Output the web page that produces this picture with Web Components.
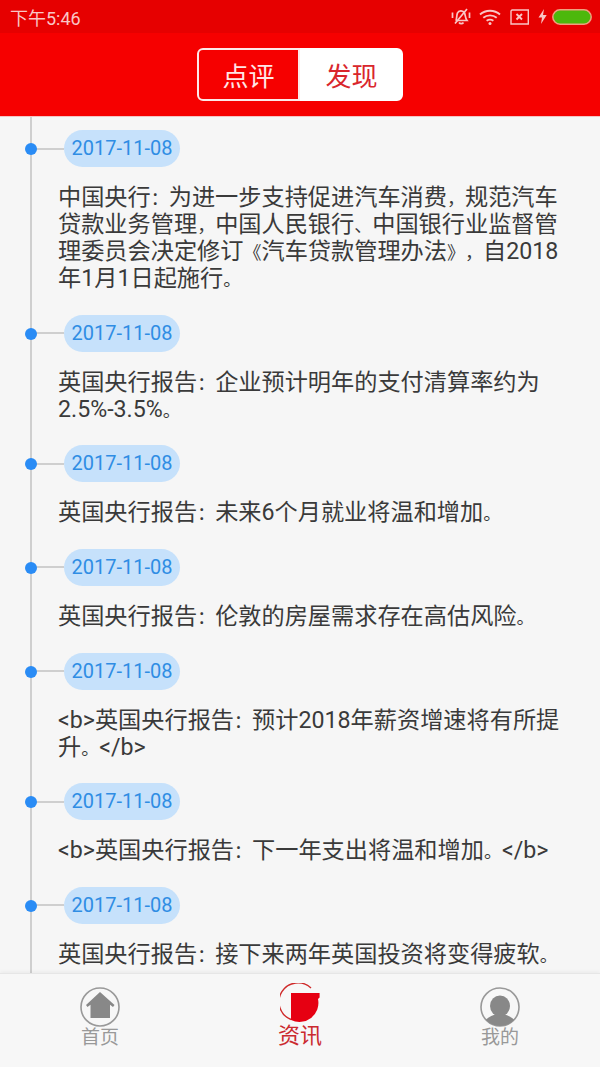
<!DOCTYPE html>
<html lang="zh">
<head>
<meta charset="utf-8">
<title>资讯</title>
<style>
  html, body { margin: 0; padding: 0; }
  body { font-family: Roboto, "Noto Sans CJK SC", sans-serif; background: #f6f6f6; }
  app-shell { width: 600px; height: 1067px; }
</style>
</head>
<body>
<app-shell>
  <status-bar slot="top" time="下午5:46"></status-bar>
  <seg-switch slot="top"></seg-switch>
  <news-timeline>
    <news-item date="2017-11-08">中国央行<span class="c">：</span>为进一步支持促进汽车消费<span class="c">，</span>规范汽车<span>贷款业务管理</span><span class="c">，</span>中国人民银行<span class="p">、</span>中国银行业监督管<span>理委员会决定修订</span><span class="p">《</span>汽车贷款管理办法<span class="p">》</span><span class="c">，</span>自2018<span>年1月1日起施行</span><span class="p">。</span></news-item>
    <news-item date="2017-11-08">英国央行报告<span class="c">：</span>企业预计明年的支付清算率约为<span>2.5%-3.5%</span><span class="p">。</span></news-item>
    <news-item date="2017-11-08">英国央行报告<span class="c">：</span>未来6个月就业将温和增加<span class="p">。</span></news-item>
    <news-item date="2017-11-08">英国央行报告<span class="c">：</span>伦敦的房屋需求存在高估风险<span class="p">。</span></news-item>
    <news-item date="2017-11-08">&lt;b&gt;英国央行报告<span class="c">：</span>预计2018年薪资增速将有所提<span>升</span><span class="c">。</span>&lt;/b&gt;</news-item>
    <news-item date="2017-11-08">&lt;b&gt;英国央行报告<span class="c">：</span>下一年支出将温和增加<span class="c">。</span>&lt;/b&gt;</news-item>
    <news-item date="2017-11-08">英国央行报告<span class="c">：</span>接下来两年英国投资将变得疲软<span class="p">。</span></news-item>
  </news-timeline>
  <tab-bar slot="bottom">
    <tab-item label="首页">
      <svg viewBox="0 0 40 40" width="40" height="40">
        <circle cx="20" cy="20" r="19" fill="none" stroke="#999" stroke-width="1.6"/>
        <path d="M20 5 L34.5 18 L33 20 L30 17.8 V31 H10.5 V17.8 L7.5 20 L6 18 Z" fill="#888"/>
      </svg>
    </tab-item>
    <tab-item label="资讯" active>
      <svg viewBox="0 0 40 40" width="40" height="40">
        <path d="M31 5 A19 19 0 1 0 11 36.5" fill="none" stroke="#cf2a2a" stroke-width="1.4"/>
        <path d="M11 10 H39.6 V14.5 L38 16 A19 19 0 0 1 11 37 Z" fill="#e60012"/>
      </svg>
    </tab-item>
    <tab-item label="我的">
      <svg viewBox="0 0 40 40" width="40" height="40">
        <defs><clipPath id="me"><circle cx="20" cy="20" r="19"/></clipPath></defs>
        <circle cx="20" cy="20" r="19" fill="none" stroke="#999" stroke-width="1.6"/>
        <g clip-path="url(#me)" fill="#888">
          <ellipse cx="20" cy="19" rx="10" ry="10.5"/>
          <path d="M3 40 C4 32 9 30 15 27.5 H25 C31 30 36 32 37 40 Z"/>
        </g>
      </svg>
    </tab-item>
  </tab-bar>
</app-shell>

<script>
class AppShell extends HTMLElement {
  constructor() {
    super();
    this.attachShadow({ mode: 'open' });
    this.shadowRoot.innerHTML = `
      <style>
        :host {
          display: flex;
          flex-direction: column;
          overflow: hidden;
          background: #f6f6f6;
        }
        .main { flex: 1; min-height: 0; overflow: hidden; }
      </style>
      <slot name="top"></slot>
      <div class="main"><slot></slot></div>
      <slot name="bottom"></slot>
    `;
  }
}

class StatusBar extends HTMLElement {
  constructor() {
    super();
    this.attachShadow({ mode: 'open' });
    this.shadowRoot.innerHTML = `
      <style>
        :host {
          display: flex;
          align-items: center;
          justify-content: space-between;
          height: 33px;
          padding: 0 8px 0 10px;
          background: #e60000;
          color: #f9c6c6;
          font-size: 18px;
        }
        .icons { display: flex; align-items: center; }
        svg { display: block; }
      </style>
      <span>${this.getAttribute('time')}</span>
      <div class="icons">
        <svg width="20" height="17" viewBox="0 0 20 17" fill="none" stroke="#f9c6c6" stroke-width="1.7" style="margin-right:8px">
          <path d="M5 12.5 C6 10 5.5 7 6.5 5 C7.5 2.5 12 2 13.5 5 C14.5 7 14 10 16 12.5 H4.5"/>
          <path d="M8 14.5 C9 16 11.5 16 12.5 14.5"/>
          <path d="M1.5 4.5 V10 M18.5 4.5 V10 M4 15.5 L16 1"/>
        </svg>
        <svg width="22" height="16" viewBox="0 0 22 16" fill="none" stroke="#f9c6c6" stroke-width="1.9" style="margin-right:9px">
          <path d="M1 5.5 C6.5 0.5 15.5 0.5 21 5.5"/>
          <path d="M4.3 8.8 C8 5.6 14 5.6 17.7 8.8"/>
          <path d="M7.6 11.8 C9.6 10.4 12.4 10.4 14.4 11.8"/>
          <circle cx="11" cy="14.4" r="1.5" fill="#f9c6c6" stroke="none"/>
        </svg>
        <svg width="19" height="16" viewBox="0 0 19 16" fill="none" stroke="#f9c6c6" style="margin-right:9px">
          <path d="M2 1 H18.3 V15 H1 V2 Z" stroke-width="1.4"/>
          <path d="M6.5 5 L12 10.5 M12 5 L6.5 10.5" stroke-width="1.9"/>
        </svg>
        <svg width="9" height="15" viewBox="0 0 9 15" style="margin-right:5px">
          <path d="M6 0 L0.5 8.5 H4 L3 15 L8.7 6 H5 Z" fill="#f9c6c6"/>
        </svg>
        <svg width="40" height="16" viewBox="0 0 40 16">
          <rect x="0.8" y="0.8" width="38.4" height="14.4" rx="7.2" fill="#4cb80c" stroke="#f0a080" stroke-width="1.5"/>
        </svg>
      </div>
    `;
  }
}

class SegSwitch extends HTMLElement {
  constructor() {
    super();
    this.attachShadow({ mode: 'open' });
    this.shadowRoot.innerHTML = `
      <style>
        :host {
          display: flex;
          justify-content: center;
          height: 84px;
          padding-top: 15px;
          box-sizing: border-box;
          background: #f60000;
          border-bottom: 1px solid #f4c4c4;
        }
        .wrap {
          display: flex;
          width: 206px;
          height: 53px;
          box-sizing: border-box;
        }
        .tab {
          flex: 1;
          box-sizing: border-box;
          display: flex;
          align-items: center;
          justify-content: center;
          font-size: 26px;
          border: 2px solid #fde8e8;
        }
        .tab:first-child { border-radius: 6px 0 0 6px; color: #ffe6e6; }
        .tab:last-child { border-radius: 0 6px 6px 0; background: #fff; border-color: #fff; color: #d9262c; }
      </style>
      <div class="wrap">
        <div class="tab">点评</div>
        <div class="tab">发现</div>
      </div>
    `;
  }
}

class NewsTimeline extends HTMLElement {
  constructor() {
    super();
    this.attachShadow({ mode: 'open' });
    this.shadowRoot.innerHTML = `
      <style>
        :host {
          display: block;
          height: 100%;
          box-sizing: border-box;
          margin-left: 30px;
          padding-top: 13px;
          border-left: 2px solid #cfcfcf;
        }
      </style>
      <slot></slot>
    `;
  }
}

class NewsItem extends HTMLElement {
  constructor() {
    super();
    this.attachShadow({ mode: 'open' });
    this.shadowRoot.innerHTML = `
      <style>
        :host {
          display: block;
          position: relative;
          padding-bottom: 22.67px;
        }
        .dot {
          position: absolute;
          left: -7px;
          top: 13px;
          width: 12px;
          height: 12px;
          border-radius: 50%;
          background: #2a8cf5;
        }
        .head { display: flex; align-items: center; height: 37px; }
        .link { width: 32px; height: 2px; background: #cfcfcf; }
        .date {
          width: 116px;
          height: 37px;
          line-height: 37px;
          text-align: center;
          border-radius: 19px;
          background: #c6e1fb;
          color: #2f8de4;
          font-size: 20px;
        }
        .text {
          margin: 17px 28px 0 26px;
          color: #3a3a3a;
          font-size: 23.2px;
          line-height: 27px;
          text-spacing-trim: space-all;
        }
        /* punctuation is narrower than a full em in the reference */
        ::slotted(.c), ::slotted(.p) { font-size: 18px; line-height: 0; }
        ::slotted(.c) { font-family: "Noto Sans CJK TC", sans-serif; }
      </style>
      <span class="dot"></span>
      <div class="head">
        <span class="link"></span>
        <span class="date">${this.getAttribute('date')}</span>
      </div>
      <div class="text"><slot></slot></div>
    `;
  }
}

class TabBar extends HTMLElement {
  constructor() {
    super();
    this.attachShadow({ mode: 'open' });
    this.shadowRoot.innerHTML = `
      <style>
        :host {
          display: grid;
          grid-template-columns: repeat(3, 200px);
          height: 94px;
          box-sizing: border-box;
          background: #f7f7f7;
          border-top: 1px solid #e6e6e6;
          box-shadow: 0 -2px 3px rgba(0,0,0,0.04);
          position: relative;
        }
      </style>
      <slot></slot>
    `;
  }
}

class TabItem extends HTMLElement {
  constructor() {
    super();
    this.attachShadow({ mode: 'open' });
    this.shadowRoot.innerHTML = `
      <style>
        :host {
          display: flex;
          flex-direction: column;
          align-items: center;
          padding-top: 13px;
          color: #999;
          font-size: 19px;
          line-height: 22px;
        }
        :host([active]) {
          padding-top: 9px;
          color: #cb2a2f;
          font-size: 22px;
          line-height: 26px;
        }
        .icon { height: 40px; }
      </style>
      <div class="icon"><slot></slot></div>
      <span>${this.getAttribute('label')}</span>
    `;
  }
}

customElements.define('app-shell', AppShell);
customElements.define('status-bar', StatusBar);
customElements.define('seg-switch', SegSwitch);
customElements.define('news-timeline', NewsTimeline);
customElements.define('news-item', NewsItem);
customElements.define('tab-bar', TabBar);
customElements.define('tab-item', TabItem);
</script>
</body>
</html>
